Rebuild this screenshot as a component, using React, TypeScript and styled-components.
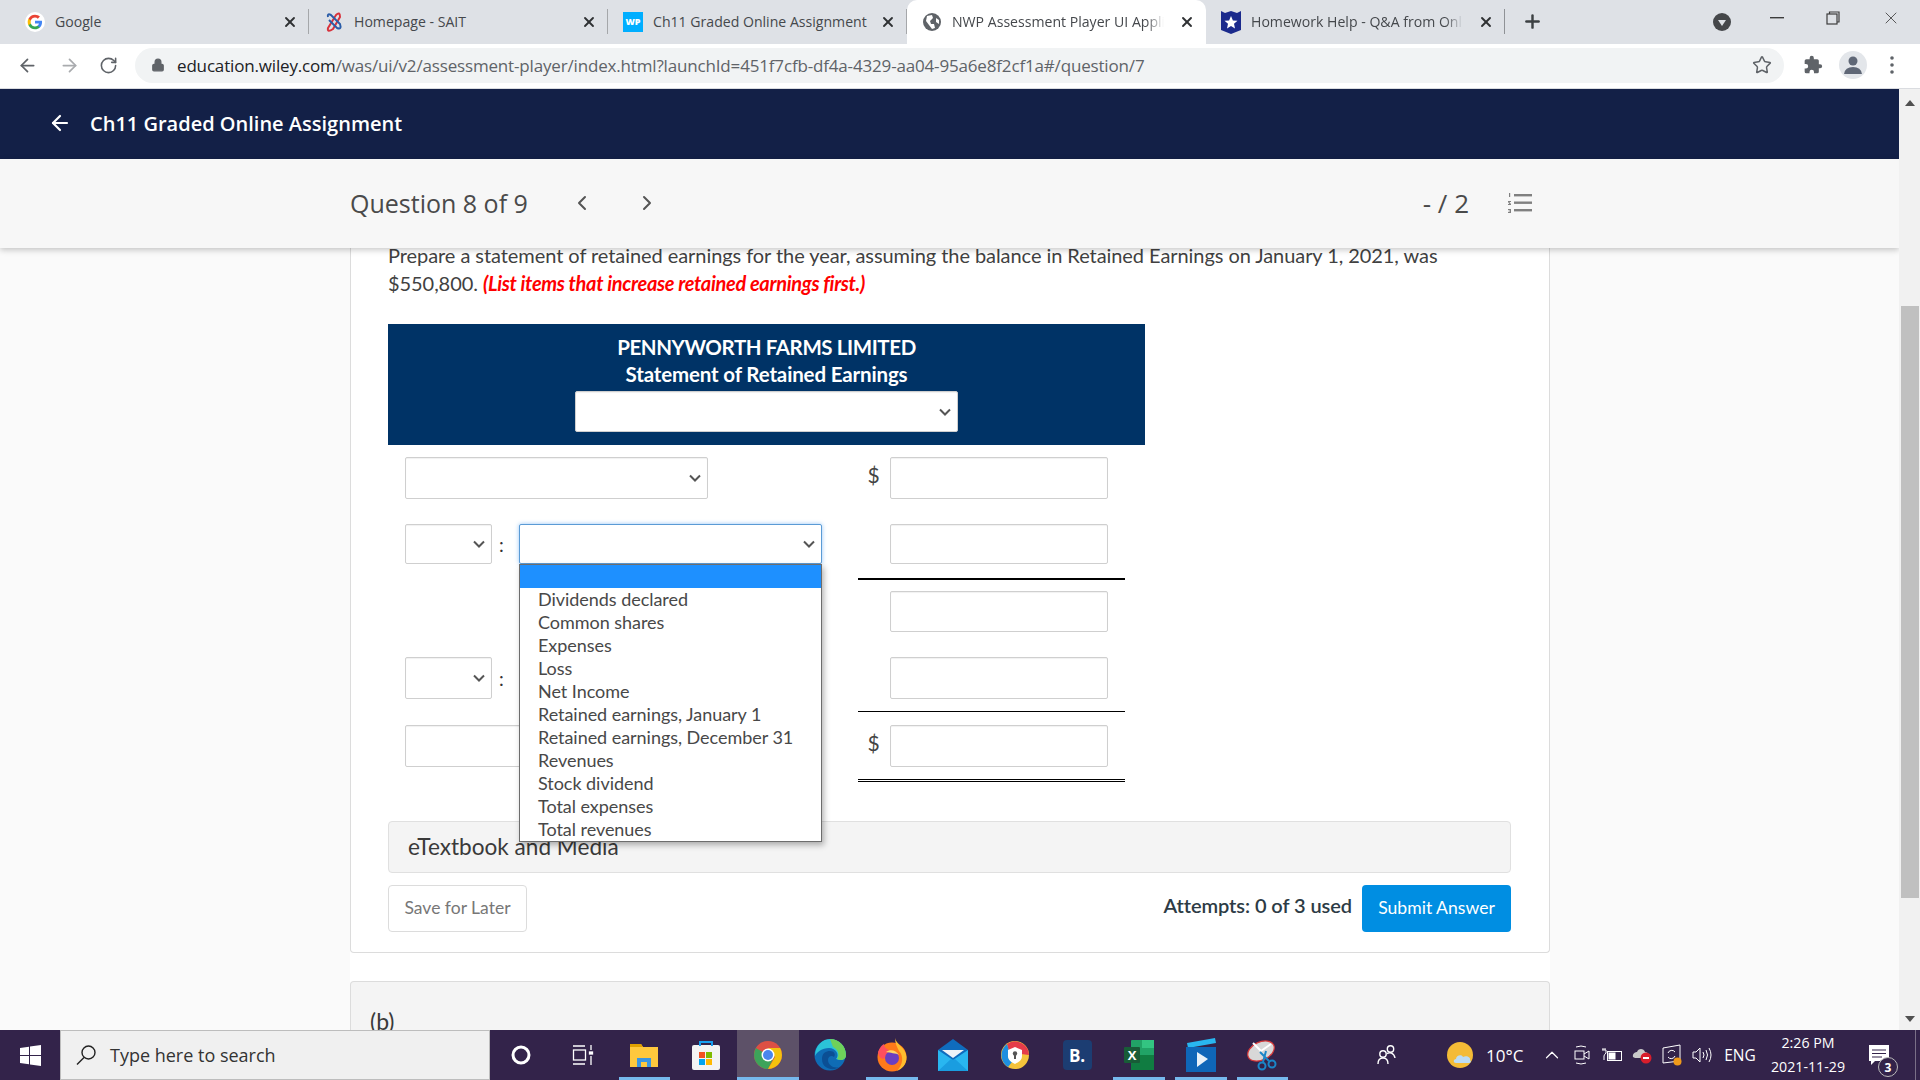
import React from "react";
import styled, { createGlobalStyle } from "styled-components";
import {
  ArrowLeft,
  ArrowRight,
  ChevronLeft,
  ChevronRight,
  ChevronUp,
  Lock,
  Plus,
  RotateCw,
  Star,
  X,
} from "lucide-react";

const GlobalStyle = createGlobalStyle`
  html, body { margin: 0; padding: 0; height: 100%; overflow: hidden; }
  body { font-family: "Lato", "Liberation Sans", sans-serif; }
  * { box-sizing: border-box; }
`;

const selectArrow = `url("data:image/svg+xml,%3Csvg xmlns='http://www.w3.org/2000/svg' width='12' height='8' viewBox='0 0 12 8'%3E%3Cpath d='M1 1.5 L6 6.5 L11 1.5' fill='none' stroke='%23555' stroke-width='2'/%3E%3C/svg%3E")`;

const Screen = styled.div`
  width: 1920px;
  height: 1080px;
  display: flex;
  flex-direction: column;
  overflow: hidden;
`;

/* ---------- browser chrome ---------- */
const TabStrip = styled.div`
  height: 44px;
  flex: none;
  background: #dee1e6;
  display: flex;
  align-items: flex-start;
  padding-left: 10px;
  font-family: "Open Sans", sans-serif;
  font-size: 14.1px;
  color: #45484c;
`;

const Tab = styled.div<{ $active?: boolean; $last?: boolean }>`
  width: 299px;
  flex: none;
  display: flex;
  align-items: center;
  padding-left: 15px;
  background: ${({ $active }) => ($active ? "#fff" : "transparent")};
  border-radius: ${({ $active }) => ($active ? "10px 10px 0 0" : "0")};
  border-right: 1px solid ${({ $active, $last }) => ($active ? "transparent" : $last ? "#8f9296" : "#a5a7aa")};
  margin-top: ${({ $active }) => ($active ? "0" : "9px")};
  padding-bottom: ${({ $active }) => ($active ? "1px" : "0")};
  height: ${({ $active }) => ($active ? "44px" : "25px")};
`;

const TabIcon = styled.span`
  width: 20px;
  height: 20px;
  flex: none;
  margin-right: 10px;
  display: flex;
  align-items: center;
  justify-content: center;
`;

const WpBadge = styled.span`
  width: 20px;
  height: 20px;
  background: #00aeff;
  color: #fff;
  font-size: 9px;
  font-weight: 800;
  display: flex;
  align-items: center;
  justify-content: center;
`;

const TabTitle = styled.span<{ $fade?: boolean }>`
  width: 222px;
  overflow: hidden;
  white-space: nowrap;
  ${({ $fade }) =>
    $fade
      ? `-webkit-mask-image: linear-gradient(to right, #000 194px, transparent 212px);
         mask-image: linear-gradient(to right, #000 194px, transparent 212px);`
      : ""}
`;

const TabClose = styled.span`
  width: 16px;
  margin-left: 5px;
  display: flex;
  color: #2f3133;
`;

const NewTab = styled.span`
  margin-left: 17px;
  height: 42px;
  display: flex;
  align-items: center;
  color: #3c4043;
`;

const WindowBtns = styled.div`
  margin-left: auto;
  display: flex;
  align-items: center;
  height: 36px;
`;

const WinBtn = styled.span<{ $w: number; $drop?: number }>`
  width: ${({ $w }) => $w}px;
  margin-top: ${({ $drop }) => $drop ?? 0}px;
  display: flex;
  justify-content: center;
  color: #3c3c3c;
`;

const Toolbar = styled.div`
  height: 45px;
  flex: none;
  background: #fff;
  border-bottom: 1px solid #dadce0;
  display: flex;
  align-items: center;
  padding-bottom: 2px;
`;

const NavBtn = styled.span<{ $w: number; $dim?: boolean }>`
  width: ${({ $w }) => $w}px;
  flex: none;
  display: flex;
  justify-content: center;
  color: ${({ $dim }) => ($dim ? "#a9abae" : "#5f6368")};
`;

const AddressBar = styled.div`
  width: 1649px;
  height: 35px;
  flex: none;
  background: #f1f3f4;
  border-radius: 18px;
  display: flex;
  align-items: center;
  padding-left: 16px;
  font-family: "Open Sans", sans-serif;
  font-size: 17px;
  letter-spacing: -0.165px;
  color: #5f6368;
`;

const Domain = styled.span`
  color: #202124;
`;

const UrlText = styled.span`
  margin-left: 12px;
  white-space: nowrap;
`;

const StarSlot = styled.span`
  margin-left: auto;
  margin-right: 12px;
  display: flex;
  color: #5f6368;
`;

const Avatar = styled.span`
  width: 28px;
  height: 28px;
  flex: none;
  border-radius: 50%;
  background: #e3e6ea;
  display: flex;
  align-items: center;
  justify-content: center;
`;

/* ---------- page ---------- */
const Viewport = styled.div`
  flex: 1;
  min-height: 0;
  display: flex;
`;

const PageArea = styled.div`
  flex: 1;
  min-width: 0;
  display: flex;
  flex-direction: column;
  background: #fafafa;
  overflow: hidden;
`;

const AppBar = styled.header`
  height: 70px;
  flex: none;
  background: #132047;
  color: #fff;
  display: flex;
  align-items: center;
  padding: 0 0 2px 48px;
  font-family: "Open Sans", sans-serif;
  font-weight: 600;
  font-size: 20px;
  gap: 18px;
`;

const QuestionBar = styled.div`
  height: 89px;
  flex: none;
  position: relative;
  z-index: 2;
  background: #f7f7f7;
  box-shadow: 0 2px 6px rgba(0, 0, 0, 0.22);
  display: flex;
  align-items: center;
  padding: 0 366px 2px 350px;
  font-family: "Open Sans", sans-serif;
  color: #4a4a4a;
`;

const QuestionLabel = styled.span`
  font-size: 25px;
  width: 220px;
  flex: none;
`;

const Pager = styled.span`
  display: flex;
  gap: 41px;
  color: #555;
`;

const Score = styled.span`
  margin-left: auto;
  font-size: 26px;
  margin-right: 38px;
`;

const Column = styled.main`
  width: 1200px;
  margin: -7px 0 0 350px;
  background: #fff;
  flex: 1;
  min-height: 0;
`;

const Card = styled.section`
  background: #fff;
  border: 1px solid #dcdcdc;
  border-top: none;
  border-radius: 0 0 4px 4px;
  padding: 0 38px 20px 37px;
`;

const Prompt = styled.p`
  margin: 0;
  font-size: 20px;
  letter-spacing: -0.066px;
  line-height: 28px;
  color: #414141;
`;

const Hint = styled.em`
  color: #ff0000;
  font-weight: 700;
  letter-spacing: -0.33px;
`;

const Statement = styled.div`
  width: 757px;
  margin-top: 27px;
`;

const StatementHead = styled.div`
  background: #003366;
  color: #fff;
  height: 121px;
  padding-top: 9px;
  display: flex;
  flex-direction: column;
  align-items: center;
  font-weight: 700;
  font-size: 20.5px;
  line-height: 28px;
  letter-spacing: -0.4px;
`;

const StatementSubtitle = styled.span`
  letter-spacing: -0.15px;
  margin-top: -1px;
`;

const Select = styled.select<{ $w: number; $focus?: boolean }>`
  width: ${({ $w }) => $w}px;
  height: 100%;
  flex: none;
  appearance: none;
  background: #fff ${selectArrow} no-repeat right 6px center;
  border: 1px solid ${({ $focus }) => ($focus ? "#5b9bd5" : "#cfcfcf")};
  border-radius: 2px;
  box-shadow: ${({ $focus }) => ($focus ? "0 0 4px rgba(60,150,240,0.55)" : "inset 0 1px 1px rgba(0,0,0,0.06)")};
  font-size: 16px;
  outline: none;
  color: #333;
`;

const HeadSelect = styled(Select)`
  height: 41px;
  margin-top: 3px;
`;

const FormRow = styled.div<{ $top: number }>`
  display: grid;
  grid-template-columns: 470px 267px;
  margin-top: ${({ $top }) => $top}px;
`;

const LabelCell = styled.div<{ $h: number }>`
  height: ${({ $h }) => $h}px;
  padding-left: 17px;
  display: flex;
  align-items: center;
  position: relative;
`;

const Colon = styled.span`
  width: 27px;
  flex: none;
  padding-right: 8px;
  text-align: center;
  font-size: 19px;
  color: #333;
`;

const DropdownAnchor = styled.div<{ $h: number }>`
  position: relative;
  height: ${({ $h }) => $h}px;
`;

const DropdownList = styled.ul`
  position: absolute;
  left: 0;
  top: 40px;
  width: 303px;
  height: 278px;
  margin: 0;
  padding: 0;
  overflow: hidden;
  list-style: none;
  background: #fff;
  border: 1px solid #6d6d6d;
  box-shadow: 2px 3px 6px rgba(0, 0, 0, 0.3);
  z-index: 5;
  font-size: 18px;
  line-height: 23px;
  color: #484848;
  letter-spacing: -0.04px;
`;

const DropdownItem = styled.li<{ $selected?: boolean }>`
  height: 23px;
  padding-left: 18px;
  white-space: nowrap;
  background: ${({ $selected }) => ($selected ? "#1e90ff" : "transparent")};
`;

const AmountCell = styled.div<{ $pad: number; $rule?: "thick" | "thin" | "double" }>`
  display: flex;
  align-items: flex-start;
  padding: 0 0 ${({ $pad }) => $pad}px 8px;
  border-bottom: ${({ $rule }) =>
    $rule === "thick" ? "2px solid #000" : $rule === "thin" ? "1px solid #000" : $rule === "double" ? "3px double #000" : "none"};
`;

const Dollar = styled.span`
  width: 24px;
  flex: none;
  padding-right: 9px;
  font-size: 21px;
  line-height: 36px;
  color: #444;
  text-align: center;
`;

const Amount = styled.input<{ $h: number }>`
  width: 218px;
  height: ${({ $h }) => $h}px;
  flex: none;
  border: 1px solid #cfcfcf;
  border-radius: 2px;
  box-shadow: inset 0 1px 1px rgba(0, 0, 0, 0.06);
  outline: none;
`;

const AmountSpacer = styled.span`
  width: 24px;
  flex: none;
`;

const Panel = styled.div`
  margin-top: 39px;
  height: 52px;
  background: #f4f4f4;
  border: 1px solid #e0e0e0;
  border-radius: 4px;
  padding: 0 0 2px 19px;
  display: flex;
  align-items: center;
  font-size: 22.6px;
  color: #3a3a3a;
`;

const Actions = styled.div`
  margin-top: 12px;
  display: flex;
  align-items: center;
`;

const SaveButton = styled.button`
  width: 139px;
  height: 47px;
  background: #fff;
  border: 1px solid #dcdcdc;
  border-radius: 4px;
  padding: 0 0 2px;
  color: #777;
  font: 400 17.5px "Lato", sans-serif;
`;

const Attempts = styled.span`
  margin-left: auto;
  margin-right: 10px;
  font-size: 20px;
  font-weight: 600;
  letter-spacing: -0.07px;
  color: #2d3b45;
  padding-bottom: 7px;
`;

const SubmitButton = styled.button`
  width: 149px;
  height: 47px;
  background: #008ee2;
  border: none;
  border-radius: 4px;
  padding: 0 0 2px;
  color: #fff;
  font: 400 17.6px "Lato", sans-serif;
`;

const NextCard = styled.section`
  margin-top: 28px;
  height: 60px;
  background: #f4f4f4;
  border: 1px solid #dcdcdc;
  border-bottom: none;
  border-radius: 4px 4px 0 0;
  padding: 24px 0 0 19px;
  font-size: 23px;
  line-height: 30px;
  color: #3a3a3a;
`;

const Scrollbar = styled.div`
  width: 21px;
  flex: none;
  background: #f1f1f1;
  display: flex;
  flex-direction: column;
  align-items: center;
  padding-top: 11px;
  font-size: 0;
`;

const ScrollArrow = styled.span<{ $down?: boolean }>`
  width: 0;
  height: 0;
  flex: none;
  border-left: 5px solid transparent;
  border-right: 5px solid transparent;
  ${({ $down }) => ($down ? "border-top: 6px solid #505050;" : "border-bottom: 6px solid #505050;")}
`;

const ScrollThumb = styled.div`
  width: 18px;
  height: 592px;
  margin-top: 200px;
  margin-bottom: 118px;
  flex: none;
  background: #c0c0c0;
`;

/* ---------- taskbar ---------- */
const Taskbar = styled.footer`
  height: 50px;
  flex: none;
  background: #33234a;
  display: flex;
  align-items: stretch;
  color: #fff;
  font-family: "Open Sans", sans-serif;
`;

const StartBtn = styled.div`
  width: 60px;
  flex: none;
  display: flex;
  align-items: center;
  justify-content: center;
`;

const SearchBox = styled.div`
  width: 430px;
  flex: none;
  background: #f0f0f0;
  border: 1px solid #bdbdbd;
  display: flex;
  align-items: center;
  padding-left: 14px;
  gap: 13px;
  color: #333;
  font-size: 18px;
`;

const TaskBtn = styled.div<{ $open?: boolean; $active?: boolean }>`
  width: 61.8px;
  flex: none;
  position: relative;
  display: flex;
  align-items: center;
  justify-content: center;
  background: ${({ $active }) => ($active ? "#5d5168" : "transparent")};

  &::after {
    content: "";
    display: ${({ $open }) => ($open ? "block" : "none")};
    position: absolute;
    bottom: 0;
    height: 3px;
    left: ${({ $active }) => ($active ? "0" : "5px")};
    right: ${({ $active }) => ($active ? "0" : "5px")};
    background: #76b9ed;
  }
`;

const BookingTile = styled.span`
  width: 29px;
  height: 30px;
  border-radius: 4px;
  background: #1c3d72;
  font: 700 17px "Open Sans", sans-serif;
  display: flex;
  align-items: center;
  justify-content: center;
`;

const Tray = styled.div`
  margin-left: auto;
  display: flex;
  align-items: center;
`;

const TraySlot = styled.span<{ $w: number; $gap?: number }>`
  width: ${({ $w }) => $w}px;
  margin-left: ${({ $gap }) => $gap ?? 0}px;
  flex: none;
  display: flex;
  align-items: center;
  justify-content: center;
  font-size: 15.5px;
  position: relative;
`;

const TempText = styled.span`
  width: 59px;
  flex: none;
  padding-left: 8px;
  font-size: 17px;
`;

const Clock = styled.span`
  width: 90px;
  flex: none;
  text-align: center;
  font-size: 14.2px;
  line-height: 24px;
`;

const NotifyBadge = styled.span`
  position: absolute;
  right: 7px;
  top: 12px;
  width: 20px;
  height: 20px;
  border-radius: 50%;
  background: #33234a;
  border: 1px solid #bbb;
  font-size: 12px;
  font-weight: 700;
  display: flex;
  align-items: center;
  justify-content: center;
`;

const ShowDesktop = styled.span`
  width: 15px;
  height: 100%;
  flex: none;
  background: linear-gradient(to right, transparent 10px, #7a6f87 10px, #7a6f87 11px, transparent 11px);
`;

/* ---------- drawn icons ---------- */
const GoogleIcon = () => (
  <svg width="20" height="20" viewBox="0 0 24 24">
    <circle cx="12" cy="12" r="12" fill="#fff" />
    <g transform="translate(2.4 2.4) scale(0.8)">
      <path fill="#4285F4" d="M22.56 12.25c0-.78-.07-1.53-.2-2.25H12v4.26h5.92c-.26 1.37-1.04 2.53-2.21 3.31v2.77h3.57c2.08-1.92 3.28-4.74 3.28-8.09z" />
      <path fill="#34A853" d="M12 23c2.97 0 5.46-.98 7.28-2.66l-3.57-2.77c-.98.66-2.23 1.06-3.71 1.06-2.86 0-5.29-1.93-6.16-4.53H2.18v2.84C3.99 20.53 7.7 23 12 23z" />
      <path fill="#FBBC05" d="M5.84 14.09c-.22-.66-.35-1.36-.35-2.09s.13-1.43.35-2.09V7.07H2.18C1.43 8.55 1 10.22 1 12s.43 3.45 1.18 4.93l3.66-2.84z" />
      <path fill="#EA4335" d="M12 5.38c1.62 0 3.06.56 4.21 1.64l3.15-3.15C17.45 2.09 14.97 1 12 1 7.7 1 3.99 3.47 2.18 7.07l3.66 2.84c.87-2.6 3.3-4.53 6.16-4.53z" />
    </g>
  </svg>
);

const SaitIcon = () => (
  <svg width="18" height="22" viewBox="0 0 18 22" fill="none" strokeWidth="2">
    <path d="M3 17 L11 4 Q15 0 15 6 L8 18 Q2 22 3 17Z" stroke="#d8323c" />
    <path d="M3 6 Q2 2 6 4 L15 13 Q17 19 12 17 L4 9" stroke="#2a5ca8" />
  </svg>
);

const GlobeIcon = () => (
  <svg width="18" height="18" viewBox="0 0 18 18">
    <circle cx="9" cy="9" r="9" fill="#5f6368" />
    <path d="M4 3 L9 2 L10 5 L7 8 L8 11 L11 11 L12 15 L9 16 L6 12 L3 8Z M13 5 L16 7 L16 11 L13 9Z" fill="#fff" />
  </svg>
);

const ShieldIcon = () => (
  <svg width="20" height="24" viewBox="0 0 20 24">
    <path d="M0 1 L4 3 L10 1 L16 3 L20 1 V20 L10 24 L0 20Z" fill="#1b2a8c" />
    <path d="M10 6 L11.9 10.4 L16.5 10.8 L13 13.8 L14 18.4 L10 16 L6 18.4 L7 13.8 L3.5 10.8 L8.1 10.4Z" fill="#fff" />
  </svg>
);

const ProfileDot = () => (
  <svg width="18" height="18" viewBox="0 0 18 18">
    <circle cx="9" cy="9" r="9" fill="#45474a" />
    <path d="M5 7 H13 L9 13Z" fill="#dee1e6" />
  </svg>
);

const PuzzleIcon = () => (
  <svg width="20" height="20" viewBox="0 0 24 24" fill="#5f6368">
    <path d="M20.5 11H19V7a2 2 0 0 0-2-2h-4V3.5a2.5 2.5 0 0 0-5 0V5H4a2 2 0 0 0-2 2v3.8h1.5a2.7 2.7 0 0 1 0 5.4H2V20a2 2 0 0 0 2 2h3.8v-1.5a2.7 2.7 0 0 1 5.4 0V22H17a2 2 0 0 0 2-2v-4h1.5a2.5 2.5 0 0 0 0-5z" />
  </svg>
);

const PersonIcon = () => (
  <svg width="18" height="20" viewBox="0 0 18 20" fill="#5f6776">
    <circle cx="9" cy="6" r="4.5" />
    <path d="M0 19 Q1 12 9 12 Q17 12 18 19Z" />
  </svg>
);

const Dots = () => (
  <svg width="4" height="18" viewBox="0 0 4 18" fill="#5f6368">
    <circle cx="2" cy="2" r="1.8" />
    <circle cx="2" cy="9" r="1.8" />
    <circle cx="2" cy="16" r="1.8" />
  </svg>
);

const NumberedList = () => (
  <svg width="26" height="22" viewBox="0 0 26 22" fill="#808080">
    <rect x="7" y="2" width="18" height="2.4" />
    <rect x="7" y="9.5" width="18" height="2.4" />
    <rect x="7" y="17" width="18" height="2.4" />
    <path d="M2 1 H3.2 V5 H2Z M1 9 H4 V10 H2.4 L4 12 V13 H1 V12 H2.4 L1 10Z M1 17 H4 V21 H1 V20 H3 V19.4 H1.6 V18.6 H3 V18 H1Z" />
  </svg>
);

const WindowsLogo = () => (
  <svg width="21" height="21" viewBox="0 0 21 21" fill="#fff">
    <path d="M0 3 L9 1.7 V10 H0Z M10 1.5 L21 0 V10 H10Z M0 11 H9 V19.3 L0 18Z M10 11 H21 V21 L10 19.5Z" />
  </svg>
);

const Magnifier = () => (
  <svg width="22" height="22" viewBox="0 0 22 22" fill="none" stroke="#222" strokeWidth="1.4">
    <circle cx="13.5" cy="8.5" r="6.5" />
    <path d="M9 13.5 L2 20.5" />
  </svg>
);

const Cortana = () => (
  <svg width="22" height="22" viewBox="0 0 22 22" fill="none" stroke="#fff" strokeWidth="3">
    <circle cx="11" cy="11" r="8" />
  </svg>
);

const TaskView = () => (
  <svg width="22" height="22" viewBox="0 0 22 22" fill="none" stroke="#fff" strokeWidth="1.3">
    <path d="M1 2 H13 M1 20 H13 M19 1 V6 M19 12 V21" />
    <rect x="1.5" y="6" width="12" height="10" />
    <rect x="17.5" y="8" width="3" height="2" fill="#fff" />
  </svg>
);

const Explorer = () => (
  <svg width="28" height="26" viewBox="0 0 28 26">
    <path d="M0 2 H11 L13 5 H28 V25 H0Z" fill="#ffc83d" />
    <path d="M0 2 H11 L13 5 H0Z" fill="#e0a000" />
    <path d="M7 25 V16 H21 V25 H17 V20 H11 V25Z" fill="#3c96e0" />
  </svg>
);

const Store = () => (
  <svg width="28" height="30" viewBox="0 0 28 30">
    <rect x="0" y="5" width="28" height="25" rx="2" fill="#f3f3f3" />
    <path d="M8 6 V2 H20 V6" stroke="#18a0f0" strokeWidth="2" fill="none" />
    <rect x="7" y="12" width="6" height="6" fill="#f25022" />
    <rect x="14" y="12" width="6" height="6" fill="#7fba00" />
    <rect x="7" y="19" width="6" height="6" fill="#00a4ef" />
    <rect x="14" y="19" width="6" height="6" fill="#ffb900" />
  </svg>
);

const ChromeLogo = () => (
  <svg width="28" height="28" viewBox="0 0 28 28">
    <circle cx="14" cy="14" r="14" fill="#dd5044" />
    <path d="M14 14 L1.9 7 A14 14 0 0 0 14 28 L21 14Z" fill="#3da35a" />
    <path d="M14 7 H26.1 A14 14 0 0 1 14 28 L21 16Z" fill="#f4c20d" />
    <circle cx="14" cy="14" r="6.5" fill="#fff" />
    <circle cx="14" cy="14" r="5" fill="#4a85ed" />
  </svg>
);

const EdgeLogo = () => (
  <svg width="32" height="32" viewBox="0 0 32 32">
    <circle cx="16" cy="16" r="15.5" fill="#0f6cb5" />
    <path d="M1 17 C1 6 9 0 16 0 C25 0 32 7 32 16 C32 21 27 22 22 20 C26 16 22 9 15 9 C8 9 3 13 1 17Z" fill="#2bc3d8" />
    <path d="M16 0 C25 0 32 7 32 16 C32 21 27 22 23 20 C26 16 24 10 19 8Z" fill="#6fd15a" />
    <path d="M8 20 C8 14 12 12 16 12 C20 12 22 15 20 18 C18 16 14 17 14 21 C14 26 20 30 25 28 C21 32 8 31 8 20Z" fill="#0b4f94" />
  </svg>
);

const FirefoxLogo = () => (
  <svg width="30" height="34" viewBox="0 0 30 34">
    <circle cx="15" cy="19" r="14.5" fill="#ff7a1a" />
    <path d="M18 0 C19 6 29 10 29.5 19 C30 26 25 31 20 33 C26 27 27 18 22 13 C20 9 18 5 18 0Z" fill="#ffbd2e" />
    <path d="M1 14 C3 9 5 7 7 6 C7 9 9 11 12 12 L8 20 C5 22 2 20 1 14Z" fill="#ff4f5e" />
    <circle cx="15" cy="20" r="7" fill="#6a3fc0" />
    <path d="M9 14 C13 11 19 12 22 17 C19 15 13 15 9 14Z" fill="#ffd567" />
  </svg>
);

const MailLogo = () => (
  <svg width="30" height="32" viewBox="0 0 30 32">
    <path d="M0 11 L15 0 L30 11 V32 H0Z" fill="#0f6cbd" />
    <path d="M4 11 H26 L15 19Z" fill="#eef3f8" />
    <path d="M0 11 L15 21 L30 11 V32 H0Z" fill="#29b6f0" />
    <path d="M0 32 L13 20 L15 21 L17 20 L30 32Z" fill="#1a9de0" />
  </svg>
);

const AvastLogo = () => (
  <svg width="28" height="28" viewBox="0 0 28 28">
    <circle cx="14" cy="14" r="14" fill="#f5c33b" />
    <path d="M6 3 A14 14 0 0 1 28 14 L20 13 A7 7 0 0 0 8 10Z" fill="#e53c4a" />
    <path d="M6 3 A14 14 0 0 0 7 26 L11 21 A8 8 0 0 1 8 10Z" fill="#1f8fe0" />
    <path d="M14 6 L21 9 V15 C21 19 18 21 14 23 C10 21 7 19 7 15 V9Z" fill="#fff" />
    <circle cx="14" cy="12.5" r="2.2" fill="#555" />
    <rect x="13" y="13" width="2" height="5" fill="#555" />
  </svg>
);

const ExcelLogo = () => (
  <svg width="30" height="30" viewBox="0 0 30 30">
    <rect x="7" y="0" width="23" height="30" rx="1" fill="#21a366" />
    <rect x="18" y="0" width="12" height="8" fill="#33c481" />
    <rect x="7" y="15" width="23" height="15" fill="#107c41" />
    <rect x="0" y="7" width="16" height="16" rx="1" fill="#185c37" />
    <text x="8" y="20" textAnchor="middle" fontSize="13" fontWeight="700" fill="#fff" fontFamily="Open Sans">X</text>
  </svg>
);

const FilmLogo = () => (
  <svg width="30" height="34" viewBox="0 0 30 34">
    <path d="M1 5 L29 0 L30 5 L2 10Z" fill="#29b6f0" />
    <rect x="0" y="9" width="30" height="25" fill="#0f66b8" />
    <path d="M11 14 L22 21 L11 29Z" fill="#e8f1f8" />
  </svg>
);

const SnipLogo = () => (
  <svg width="30" height="32" viewBox="0 0 30 32" fill="none">
    <ellipse cx="14" cy="12" rx="14" ry="9" transform="rotate(-25 14 12)" fill="#d8d8d8" stroke="#d83a3a" strokeWidth="1.2" />
    <path d="M14 12 L6 4 M14 12 L24 5" stroke="#fff" strokeWidth="2" />
    <path d="M13 13 L22 22 M19 12 L16 23" stroke="#1a86c8" strokeWidth="2" />
    <circle cx="15" cy="27" r="3.5" stroke="#1a86c8" strokeWidth="2" />
    <circle cx="25" cy="25" r="3.5" stroke="#1a86c8" strokeWidth="2" />
  </svg>
);

const PeopleIcon = () => (
  <svg width="20" height="22" viewBox="0 0 20 22" fill="none" stroke="#fff" strokeWidth="1.4">
    <circle cx="13.5" cy="5" r="3.2" />
    <circle cx="6" cy="10" r="3.2" />
    <path d="M1 20 C1 15 3 14 6 14 C9 14 11 15 11 20 M10 9.5 C12 8.5 17 8 18 14" />
  </svg>
);

const WeatherIcon = () => (
  <svg width="26" height="26" viewBox="0 0 26 26">
    <circle cx="13" cy="13" r="13" fill="#f4bb36" />
    <path d="M9 21 C6 21 6 17 9 17 C9 13 15 12 16 15 C20 13 24 16 23 18 C25 20 23 21 22 21Z" fill="#bcdcf4" />
  </svg>
);

const CameraTray = () => (
  <svg width="16" height="20" viewBox="0 0 16 20" fill="none" stroke="#fff" strokeWidth="1">
    <path d="M2 2 Q7 0 12 2 M2 18 Q7 20 12 18" />
    <rect x="1" y="6" width="9" height="8" />
    <path d="M10 9 L15 6 V14 L10 11" />
  </svg>
);

const BatteryTray = () => (
  <svg width="20" height="16" viewBox="0 0 20 16" fill="none" stroke="#fff" strokeWidth="1">
    <rect x="5.5" y="4.5" width="14" height="9" />
    <rect x="7" y="6" width="6" height="6" fill="#fff" />
    <path d="M3 1 V3 M1 1 V3 M0 3 H4 V6 Q2 8 2 9 V13" />
  </svg>
);

const OneDriveTray = () => (
  <svg width="20" height="18" viewBox="0 0 20 18">
    <path d="M1 11 C0 7 4 6 5 6 C6 2 12 2 13 6 C17 6 17 11 14 12 H3Z" fill="#c9c9c9" />
    <circle cx="14" cy="12" r="5.5" fill="#d81e2c" />
    <rect x="11" y="11" width="6" height="2" fill="#fff" />
  </svg>
);

const SyncTray = () => (
  <svg width="20" height="22" viewBox="0 0 20 22" fill="none" stroke="#fff" strokeWidth="1">
    <path d="M1 4 L18 1 V17 L1 19Z" />
    <path d="M6 9 A4 4 0 0 1 13 8 M13 12 A4 4 0 0 1 6 13" />
    <circle cx="15.5" cy="17.5" r="4" fill="#f09a1a" stroke="none" />
  </svg>
);

const SpeakerTray = () => (
  <svg width="20" height="18" viewBox="0 0 20 18" fill="none" stroke="#fff" strokeWidth="1">
    <path d="M1 6 H4 L8 2 V16 L4 12 H1Z" />
    <path d="M11 6 Q13 9 11 12 M14 4 Q17 9 14 14 M17 2 Q21 9 17 16" />
  </svg>
);

const NoteIcon = () => (
  <svg width="20" height="20" viewBox="0 0 20 20">
    <path d="M0 0 H20 V16 H6 L2 20 V16 H0Z" fill="#fff" />
    <path d="M3 5 H17 M3 8.5 H17 M3 12 H13" stroke="#33234a" strokeWidth="1.2" />
  </svg>
);

/* ---------- data ---------- */
const tabs = [
  { title: "Google", icon: <GoogleIcon /> },
  { title: "Homepage - SAIT", icon: <SaitIcon /> },
  { title: "Ch11 Graded Online Assignment", icon: <WpBadge>WP</WpBadge> },
  { title: "NWP Assessment Player UI Application", icon: <GlobeIcon />, active: true, fade: true },
  { title: "Homework Help - Q&A from Online Tutors", icon: <ShieldIcon />, last: true, fade: true },
];

const options = [
  "",
  "Dividends declared",
  "Common shares",
  "Expenses",
  "Loss",
  "Net Income",
  "Retained earnings, January 1",
  "Retained earnings, December 31",
  "Revenues",
  "Stock dividend",
  "Total expenses",
  "Total revenues",
];

const taskButtons = [
  { icon: <Cortana /> },
  { icon: <TaskView /> },
  { icon: <Explorer />, open: true },
  { icon: <Store /> },
  { icon: <ChromeLogo />, open: true, active: true },
  { icon: <EdgeLogo /> },
  { icon: <FirefoxLogo />, open: true },
  { icon: <MailLogo /> },
  { icon: <AvastLogo /> },
  { icon: <BookingTile>B.</BookingTile> },
  { icon: <ExcelLogo />, open: true },
  { icon: <FilmLogo />, open: true },
  { icon: <SnipLogo />, open: true },
];

const EmptySelect = ({ w, focus }: { w: number; focus?: boolean }) => (
  <Select $w={w} $focus={focus} defaultValue="">
    <option value="" />
  </Select>
);

export default function App() {
  return (
    <Screen>
      <GlobalStyle />
      <TabStrip>
        {tabs.map((t) => (
          <Tab key={t.title} $active={t.active} $last={t.last}>
            <TabIcon>{t.icon}</TabIcon>
            <TabTitle $fade={t.fade}>{t.title}</TabTitle>
            <TabClose>
              <X size={16} strokeWidth={2.8} />
            </TabClose>
          </Tab>
        ))}
        <NewTab>
          <Plus size={21} strokeWidth={2.8} />
        </NewTab>
        <WindowBtns>
          <WinBtn $w={56} $drop={8}>
            <ProfileDot />
          </WinBtn>
          <WinBtn $w={54}>
            <svg width="14" height="2" viewBox="0 0 14 2"><rect width="14" height="1.4" fill="#3c3c3c" /></svg>
          </WinBtn>
          <WinBtn $w={58}>
            <svg width="14" height="14" viewBox="0 0 14 14" fill="none" stroke="#3c3c3c" strokeWidth="1.2"><rect x="1" y="3" width="10" height="10" /><path d="M3.5 3 V1 H13 V11 H11" /></svg>
          </WinBtn>
          <WinBtn $w={58}>
            <X size={20} strokeWidth={1} />
          </WinBtn>
        </WindowBtns>
      </TabStrip>

      <Toolbar>
        <NavBtn $w={54}><ArrowLeft size={21} strokeWidth={2} /></NavBtn>
        <NavBtn $w={30} $dim><ArrowRight size={21} strokeWidth={2} /></NavBtn>
        <NavBtn $w={48}><RotateCw size={19} strokeWidth={2} /></NavBtn>
        <NavBtn $w={3} />
        <AddressBar>
          <Lock size={14} fill="#5f6368" color="#5f6368" />
          <UrlText>
            <Domain>education.wiley.com</Domain>/was/ui/v2/assessment-player/index.html?launchId=451f7cfb-df4a-4329-aa04-95a6e8f2cf1a#/question/7
          </UrlText>
          <StarSlot><Star size={20} strokeWidth={1.8} /></StarSlot>
        </AddressBar>
        <NavBtn $w={58}><PuzzleIcon /></NavBtn>
        <NavBtn $w={22}><Avatar><PersonIcon /></Avatar></NavBtn>
        <NavBtn $w={56}><Dots /></NavBtn>
      </Toolbar>

      <Viewport>
        <PageArea>
          <AppBar>
            <ArrowLeft size={24} strokeWidth={2.2} />
            <span>Ch11 Graded Online Assignment</span>
          </AppBar>
          <QuestionBar>
            <QuestionLabel>Question 8 of 9</QuestionLabel>
            <Pager>
              <ChevronLeft size={24} strokeWidth={2} />
              <ChevronRight size={24} strokeWidth={2} />
            </Pager>
            <Score>- / 2</Score>
            <NumberedList />
          </QuestionBar>
          <Column>
            <Card>
              <Prompt>
                Prepare a statement of retained earnings for the year, assuming the balance in Retained Earnings on January 1, 2021, was
                <br />
                $550,800. <Hint>(List items that increase retained earnings first.)</Hint>
              </Prompt>
              <Statement>
                <StatementHead>
                  <span>PENNYWORTH FARMS LIMITED</span>
                  <StatementSubtitle>Statement of Retained Earnings</StatementSubtitle>
                  <HeadSelect $w={383} defaultValue="">
                    <option value="" />
                  </HeadSelect>
                </StatementHead>

                <FormRow $top={12}>
                  <LabelCell $h={42}><EmptySelect w={303} /></LabelCell>
                  <AmountCell $pad={0}>
                    <Dollar>$</Dollar>
                    <Amount $h={42} />
                  </AmountCell>
                </FormRow>

                <FormRow $top={25}>
                  <LabelCell $h={40}>
                    <EmptySelect w={87} />
                    <Colon>:</Colon>
                    <DropdownAnchor $h={40}>
                      <EmptySelect w={303} focus />
                      <DropdownList>
                        {options.map((o, i) => (
                          <DropdownItem key={i} $selected={i === 0}>{o}</DropdownItem>
                        ))}
                      </DropdownList>
                    </DropdownAnchor>
                  </LabelCell>
                  <AmountCell $pad={14} $rule="thick">
                    <AmountSpacer />
                    <Amount $h={40} />
                  </AmountCell>
                </FormRow>

                <FormRow $top={11}>
                  <LabelCell $h={41} />
                  <AmountCell $pad={0}>
                    <AmountSpacer />
                    <Amount $h={41} />
                  </AmountCell>
                </FormRow>

                <FormRow $top={25}>
                  <LabelCell $h={42}>
                    <EmptySelect w={87} />
                    <Colon>:</Colon>
                    <EmptySelect w={303} />
                  </LabelCell>
                  <AmountCell $pad={12} $rule="thin">
                    <AmountSpacer />
                    <Amount $h={42} />
                  </AmountCell>
                </FormRow>

                <FormRow $top={13}>
                  <LabelCell $h={42}><EmptySelect w={303} /></LabelCell>
                  <AmountCell $pad={12} $rule="double">
                    <Dollar>$</Dollar>
                    <Amount $h={42} />
                  </AmountCell>
                </FormRow>
              </Statement>

              <Panel>eTextbook and Media</Panel>
              <Actions>
                <SaveButton>Save for Later</SaveButton>
                <Attempts>Attempts: 0 of 3 used</Attempts>
                <SubmitButton>Submit Answer</SubmitButton>
              </Actions>
            </Card>
            <NextCard>(b)</NextCard>
          </Column>
        </PageArea>
        <Scrollbar>
          <ScrollArrow />
          <ScrollThumb />
          <ScrollArrow $down />
        </Scrollbar>
      </Viewport>

      <Taskbar>
        <StartBtn><WindowsLogo /></StartBtn>
        <SearchBox>
          <Magnifier />
          <span>Type here to search</span>
        </SearchBox>
        {taskButtons.map((b, i) => (
          <TaskBtn key={i} $open={b.open} $active={b.active}>{b.icon}</TaskBtn>
        ))}
        <Tray>
          <TraySlot $w={40}><PeopleIcon /></TraySlot>
          <TraySlot $w={36} $gap={35}><WeatherIcon /></TraySlot>
          <TempText>10°C</TempText>
          <TraySlot $w={30}><ChevronUp size={22} strokeWidth={1.3} /></TraySlot>
          <TraySlot $w={30}><CameraTray /></TraySlot>
          <TraySlot $w={30}><BatteryTray /></TraySlot>
          <TraySlot $w={30}><OneDriveTray /></TraySlot>
          <TraySlot $w={30}><SyncTray /></TraySlot>
          <TraySlot $w={30}><SpeakerTray /></TraySlot>
          <TraySlot $w={46}>ENG</TraySlot>
          <Clock>2:26 PM<br />2021-11-29</Clock>
          <TraySlot $w={52}>
            <NoteIcon />
            <NotifyBadge>3</NotifyBadge>
          </TraySlot>
          <ShowDesktop />
        </Tray>
      </Taskbar>
    </Screen>
  );
}
